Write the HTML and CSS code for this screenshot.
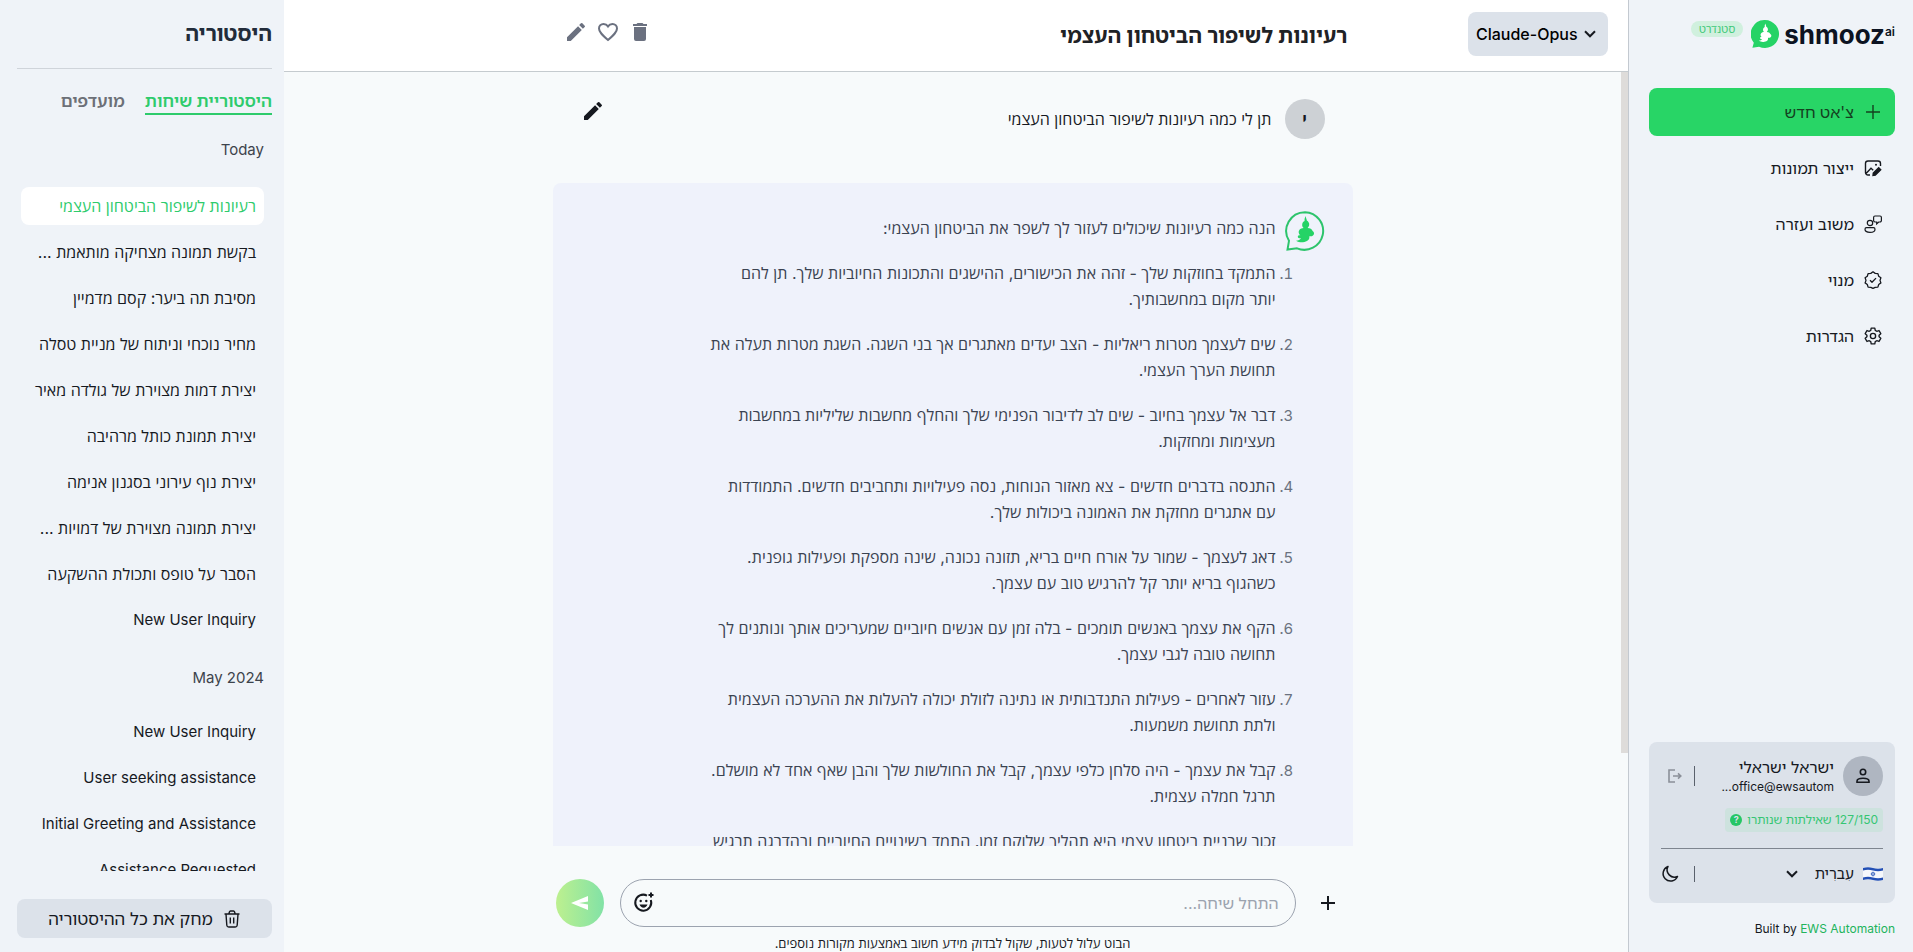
FILE: index.html
```html
<!DOCTYPE html>
<html lang="he" dir="rtl">
<head>
<meta charset="utf-8">
<title>shmooz ai</title>
<link rel="stylesheet" href="styles.css">
</head>
<body>
<svg width="0" height="0" class="sprite" aria-hidden="true">
  <symbol id="genie" viewBox="0 0 40 40">
    <path d="M20.600 5 C20.800 7 21.800 8 21.800 9.500 C23.400 10.500 24.500 12 24.200 14 C24 15.500 23 16.300 22.600 17 C25 17 27 18 27.600 20 C29.500 21 29.500 23.500 28 24.500 C26.500 25.800 24.800 25 24.200 25.600 C25.200 28.600 22 31 18 31.300 C15.500 31.500 13 31 11 29.800 C13.500 29.400 15 28.800 16 27.300 C14.300 27.500 12.500 26.800 12.800 25.400 C13.300 24.200 14.800 24.200 15.400 24.600 C13.600 23 13 20.500 14.500 18.800 C15.500 17.500 17 17.100 18.600 17 C17.600 16 17 15 17.200 13.500 C17.300 11.800 18.300 10.700 19.600 10 C19.300 8 20 6.500 20.600 5Z"/>
  </symbol>
  <symbol id="pencil" viewBox="0 0 24 24"><path d="M3 17.250V21h3.750L17.810 9.940l-3.750-3.750L3 17.250zM20.710 7.040a1 1 0 0 0 0-1.410l-2.340-2.340a1 1 0 0 0-1.410 0l-1.830 1.830 3.750 3.750 1.830-1.830z"/></symbol>
  <symbol id="chevron" viewBox="0 0 12 8"><path d="M1 1.300l5 5 5-5" fill="none" stroke="currentColor" stroke-width="2"/></symbol>
</svg>
<div class="app">
  <aside class="sidebar">
    <div class="brand">
      <a class="logo" href="#" dir="ltr">
        <svg class="logo-mark" viewBox="0 0 40 40" aria-hidden="true"><path d="M20 0a20 20 0 1 1-8.500 38.100L2 39.500l2-7A20 20 0 0 1 20 0z" fill="#25d366"/><use href="#genie" fill="#fff"/></svg>
        <span class="logo-word">shmooz</span><sup class="logo-sup">ai</sup>
      </a>
      <span class="plan">סטנדרט</span>
    </div>
    <nav class="nav">
      <button class="nav-item nav-new" type="button">
        <svg viewBox="0 0 18 18" fill="none" stroke="currentColor" stroke-width="1.400"><path d="M9 2v14M2 9h14"/></svg>צ'אט חדש</button>
      <a class="nav-item" href="#"><svg viewBox="0 0 18 18" fill="none" stroke="currentColor" stroke-width="1.400"><path d="M6 16H4a2.500 2.500 0 0 1-2.500-2.500v-9A2.500 2.500 0 0 1 4 2h10a2.500 2.500 0 0 1 2.500 2.500V7M2 14.500l5-5.300 2.200 2"/><circle cx="12" cy="5.800" r="1" fill="currentColor" stroke="none"/><path d="M9 16.500l.3-2.300 5.400-5.400 2 2-5.400 5.400z" fill="currentColor"/></svg>ייצור תמונות</a>
      <a class="nav-item" href="#"><svg viewBox="0 0 18 18" fill="none" stroke="currentColor" stroke-width="1.200"><circle cx="6" cy="8" r="2.700"/><path d="M2.500 12.700h7a1.500 1.500 0 0 1 1.500 1.500c0 2-2.300 3.200-5 3.200s-5-1.200-5-3.200a1.500 1.500 0 0 1 1.500-1.500zM11 1h5a1.400 1.400 0 0 1 1.400 1.400v3.200A1.400 1.400 0 0 1 16 7h-1.300l-2 1.800V7H11a1.400 1.400 0 0 1-1.400-1.400V2.400A1.400 1.400 0 0 1 11 1z"/></svg>משוב ועזרה</a>
      <a class="nav-item" href="#"><svg viewBox="0 0 18 18" fill="none" stroke="currentColor" stroke-width="1.300" stroke-linejoin="round"><path d="M9 .8l2.200 1.600 2.700.2.800 2.600 2.200 1.600-.9 2.600.9 2.500-2.200 1.600-.8 2.600-2.700.2L9 17.400l-2.200-1.100-2.700-.2-.8-2.600-2.200-1.600.9-2.500-.9-2.600 2.200-1.600.8-2.600 2.700-.2z"/><path d="M6 9.300l2 2 4-4.200"/></svg>מנוי</a>
      <a class="nav-item" href="#"><svg viewBox="0 0 24 24" fill="none" stroke="currentColor" stroke-width="1.800" stroke-linejoin="round"><circle cx="12" cy="12" r="3.500"/><path d="M9.600 1.500h4.800l.6 3 2 1.200 3-1 2.400 4.200-2.300 2v2.200l2.300 2-2.400 4.200-3-1-2 1.200-.6 3H9.600l-.6-3-2-1.200-3 1-2.400-4.200 2.300-2v-2.200l-2.300-2L4 4.700l3 1 2-1.200z"/></svg>הגדרות</a>
    </nav>
    <section class="account">
      <div class="profile">
        <span class="avatar avatar-user"><svg width="18" height="18" viewBox="0 0 18 18" fill="none" stroke="currentColor" stroke-width="1.600"><circle cx="9" cy="5" r="2.700"/><path d="M3 15.200v-1c0-1.800 3-2.900 6-2.900s6 1.100 6 2.900v1z"/></svg></span>
        <div class="who"><strong class="who-name">ישראל ישראלי</strong><span class="who-mail">office@ewsautom...</span></div>
        <span class="bar"></span>
        <button class="icon-btn logout" type="button" aria-label="יציאה"><svg width="14" height="14" viewBox="0 0 14 14" fill="none" stroke="currentColor" stroke-width="1.600"><path d="M7 1H1v12h6M5 7h7.500M10 4.300L12.800 7 10 9.700"/></svg></button>
      </div>
      <div class="quota">127/150 שאילתות שנותרו <span class="quota-help">?</span></div>
      <div class="locale">
        <svg class="flag" viewBox="0 0 20 14"><path d="M0 1q5-1.500 10 0t10 0v12q-5 1.500-10 0t-10 0z" fill="#f6f8fc"/><path d="M0 1q5-1.500 10 0t10 0v2.500q-5 1.500-10 0t-10 0zM0 10.500q5-1.500 10 0t10 0V13q-5 1.500-10 0t-10 0z" fill="#2450b5"/><path d="M10 4.800l2 3.200H8zM10 9.300L8 6h4z" fill="none" stroke="#2450b5" stroke-width=".6"/></svg>
        <label class="lang"><select class="lang-select" aria-label="שפה"><option>עִברִית</option></select><svg class="lang-arrow"><use href="#chevron"/></svg></label>
        <span class="bar bar-short"></span>
        <button class="icon-btn" type="button" aria-label="מצב כהה"><svg width="18" height="18" viewBox="0 0 18 18" fill="none" stroke="currentColor" stroke-width="1.500" stroke-linejoin="round"><path d="M7 1.500A7.500 7.500 0 1 0 16.500 11.500 7.300 7.300 0 0 1 7 1.500z"/></svg></button>
      </div>
    </section>
    <p class="credit" dir="ltr">Built by <a href="#">EWS Automation</a></p>
  </aside>

  <main class="main">
    <header class="topbar">
      <label class="model" dir="ltr"><select class="model-select" aria-label="מודל"><option>Claude-Opus</option></select><svg class="model-arrow"><use href="#chevron"/></svg></label>
      <div class="topbar-inner">
        <h1 class="topbar-title">רעיונות לשיפור הביטחון העצמי</h1>
        <div class="actions">
          <button class="icon-btn" type="button" aria-label="מחק"><svg width="24" height="24" viewBox="0 0 24 24" fill="currentColor"><path d="M6 19a2 2 0 0 0 2 2h8a2 2 0 0 0 2-2V7H6zM19 4h-3.500l-1-1h-5l-1 1H5v2h14z"/></svg></button>
          <button class="icon-btn" type="button" aria-label="מועדפים"><svg width="24" height="24" viewBox="0 0 24 24" fill="none" stroke="currentColor" stroke-width="2"><path d="M12 20C6 14.800 3 12 3 8.500A4.500 4.500 0 0 1 7.500 4C9.300 4 11 4.900 12 6.400 13 4.900 14.700 4 16.500 4A4.500 4.500 0 0 1 21 8.500c0 3.500-3 6.300-9 11.500z"/></svg></button>
          <button class="icon-btn" type="button" aria-label="שנה שם"><svg width="24" height="24" fill="currentColor"><use href="#pencil"/></svg></button>
        </div>
      </div>
    </header>
    <div class="body">
      <div class="scrollbar"><div class="thumb"></div></div>
      <div class="content">
        <div class="thread">
          <article class="ask">
            <span class="avatar avatar-letter">י</span>
            <p class="ask-text">תן לי כמה רעיונות לשיפור הביטחון העצמי</p>
            <button class="icon-btn ask-edit" type="button" aria-label="עריכה"><svg width="24" height="24" fill="currentColor"><use href="#pencil"/></svg></button>
          </article>
          <article class="reply">
            <svg class="reply-mark" viewBox="0 0 40 40"><path d="M20 1.200A18.800 18.800 0 1 1 12 37.300L2.500 38.600 4 29.800A18.800 18.800 0 0 1 20 1.200z" fill="none" stroke="#2dc46c" stroke-width="2"/><use href="#genie" fill="#25d366"/></svg>
            <div class="prose">
              <p>הנה כמה רעיונות שיכולים לעזור לך לשפר את הביטחון העצמי:</p>
              <ol>
                <li>התמקד בחוזקות שלך - זהה את הכישורים, ההישגים והתכונות החיוביות שלך. תן להם יותר&nbsp;מקום במחשבותיך.</li>
                <li>שים לעצמך מטרות ריאליות - הצב יעדים מאתגרים אך בני השגה. השגת מטרות תעלה את תחושת הערך העצמי.</li>
                <li>דבר אל עצמך בחיוב - שים לב לדיבור הפנימי שלך והחלף מחשבות שליליות במחשבות מעצימות ומחזקות.</li>
                <li>התנסה בדברים חדשים - צא מאזור הנוחות, נסה פעילויות ותחביבים חדשים. התמודדות עם&nbsp;אתגרים מחזקת את האמונה ביכולות שלך.</li>
                <li>דאג לעצמך - שמור על אורח חיים בריא, תזונה נכונה, שינה מספקת ופעילות גופנית. כשהגוף&nbsp;בריא יותר קל להרגיש טוב עם עצמך.</li>
                <li>הקף את עצמך באנשים תומכים - בלה זמן עם אנשים חיוביים שמעריכים אותך ונותנים לך תחושה טובה לגבי עצמך.</li>
                <li>עזור לאחרים - פעילות התנדבותית או נתינה לזולת יכולה להעלות את ההערכה העצמית ולתת&nbsp;תחושת משמעות.</li>
                <li>קבל את עצמך - היה סלחן כלפי עצמך, קבל את החולשות שלך והבן שאף אחד לא מושלם. תרגל&nbsp;חמלה עצמית.</li>
              </ol>
              <p>זכור שבניית ביטחון עצמי היא תהליך שלוקח זמן. התמד בשינויים החיוביים ובהדרגה תרגיש</p>
            </div>
          </article>
        </div>
        <form class="composer">
          <button class="icon-btn attach" type="button" aria-label="צרף"><svg width="24" height="24" viewBox="0 0 24 24" stroke="currentColor" stroke-width="2"><path d="M12 5v14M5 12h14"/></svg></button>
          <div class="field">
            <input class="field-input" type="text" placeholder="התחל שיחה..." aria-label="התחל שיחה">
            <button class="icon-btn" type="button" aria-label="אימוג'י"><svg width="24" height="24" viewBox="0 0 24 24" fill="none" stroke="currentColor" stroke-width="2"><path d="M15 4.600A8 8 0 1 0 18.800 9"/><path d="M19 1.500v5M16.500 4h5"/><path d="M7.500 13.500h8c-.6 2-2.200 3.200-4 3.200s-3.400-1.200-4-3.200z" fill="currentColor" stroke="none"/><circle cx="8.700" cy="10" r="1.200" fill="currentColor" stroke="none"/><circle cx="14.300" cy="10" r="1.200" fill="currentColor" stroke="none"/></svg></button>
          </div>
          <button class="send" type="submit" aria-label="שלח"><svg width="20" height="20" viewBox="0 0 20 20" fill="#fff"><path d="M1 10L18 3v5.600L9 10l9 1.400V17z"/></svg></button>
        </form>
        <p class="notice">הבוט עלול לטעות, שקול לבדוק מידע חשוב באמצעות מקורות נוספים.</p>
      </div>
    </div>
  </main>

  <aside class="history">
    <h2 class="history-title">היסטוריה</h2>
    <div class="tabs">
      <button class="tab tab-on" type="button">היסטוריית שיחות</button>
      <button class="tab" type="button">מועדפים</button>
    </div>
    <div class="history-list">
      <h3 class="period">Today</h3>
      <ul class="chats">
        <li><a class="chat chat-on" href="#">רעיונות לשיפור הביטחון העצמי</a></li>
        <li><a class="chat" href="#">בקשת תמונה מצחיקה מותאמת ...</a></li>
        <li><a class="chat" href="#">מסיבת תה ביער: קסם מדמיין</a></li>
        <li><a class="chat" href="#">מחיר נוכחי וניתוח של מניית טסלה</a></li>
        <li><a class="chat" href="#">יצירת דמות מצוירת של גולדה מאיר</a></li>
        <li><a class="chat" href="#">יצירת תמונת כותל מרהיבה</a></li>
        <li><a class="chat" href="#">יצירת נוף עירוני בסגנון אנימה</a></li>
        <li><a class="chat" href="#">יצירת תמונה מצוירת של דמויות ...</a></li>
        <li><a class="chat" href="#">הסבר על טופס ותכולת ההשקעה</a></li>
        <li><a class="chat" href="#" lang="en">New User Inquiry</a></li>
      </ul>
      <h3 class="period">May 2024</h3>
      <ul class="chats">
        <li><a class="chat" href="#" lang="en">New User Inquiry</a></li>
        <li><a class="chat" href="#" lang="en">User seeking assistance</a></li>
        <li><a class="chat" href="#" lang="en">Initial Greeting and Assistance</a></li>
        <li><a class="chat" href="#" lang="en">Assistance Requested</a></li>
      </ul>
    </div>
    <button class="clear" type="button"><svg width="18" height="18" viewBox="0 0 18 18" fill="none" stroke="currentColor" stroke-width="1.400"><path d="M1.500 4h15M3 4l.8 11.200A2 2 0 0 0 5.800 17h6.400a2 2 0 0 0 2-1.800L15 4M5.800 4l.7-2.200a1.200 1.200 0 0 1 1-.8h3a1.200 1.200 0 0 1 1 .8l.7 2.200M7.300 7.500v6M10.700 7.500v6"/></svg>מחק את כל ההיסטוריה</button>
  </aside>
</div>
</body>
</html>
```
FILE: styles.css
```css
* { box-sizing: border-box; }
body { margin: 0; font-family: Inter, "Noto Sans", "Noto Sans Hebrew", sans-serif; font-size: 16px; line-height: 24px; color: #16191f; background: #f7fafb; }
h1, h2, h3, p, ul { margin: 0; padding: 0; }
ul { list-style: none; }
a { color: inherit; text-decoration: none; }
button, select, input { font: inherit; color: inherit; }
button { cursor: pointer; border: 0; background: none; padding: 0; }
.sprite { position: absolute; }
.icon-btn { display: flex; flex: none; }
.app { display: flex; height: 100vh; overflow: hidden; }

/* Navigation sidebar */
.sidebar { flex: none; width: 285px; display: flex; flex-direction: column; padding: 20px 18px 12px 20px; background: #eff3f8; border-left: 1px solid #c3c9d0; }
.brand { display: flex; align-items: flex-start; gap: 8px; height: 68px; }
.logo { display: flex; align-items: flex-start; color: #0c1322; }
.logo-mark { width: 28px; height: 28px; margin-right: 5px; }
.logo-word { font-size: 26px; font-weight: 700; line-height: 29px; }
.logo-sup { font-size: 12px; font-weight: 600; line-height: 24px; }
.plan { margin-top: 1px; padding: 0 8px; border-radius: 8px; background: #d0f0de; color: #3ec878; font-size: 11px; line-height: 16px; }
.nav { display: flex; flex-direction: column; gap: 8px; }
.nav-item { display: flex; align-items: center; gap: 10px; height: 48px; padding: 0 13px; border-radius: 8px; }
.nav-item svg { width: 18px; height: 18px; }
.nav-new { background: #28d566; color: #14401f; }
.account { margin-top: auto; padding: 14px 12px 20px; border-radius: 8px; background: #dce2ea; }
.profile { display: flex; align-items: center; }
.avatar { flex: none; display: flex; align-items: center; justify-content: center; width: 40px; height: 40px; border-radius: 50%; }
.avatar-user { background: #afb6c1; }
.who { flex: 1; display: flex; flex-direction: column; margin-right: 9px; }
.who-name { font-weight: 400; line-height: 22px; }
.who-mail { font-size: 12px; line-height: 18px; }
.bar { width: 1px; height: 20px; background: #5a616c; margin-left: 12px; }
.bar-short { height: 16px; margin-left: 15px; }
.logout { color: #8b9099; margin-left: 7px; }
.quota { display: flex; align-items: center; gap: 5px; width: max-content; margin-top: 12px; padding: 0 5px; border-radius: 4px; background: #cde2de; color: #35c673; font-size: 12px; line-height: 24px; }
.quota-help { width: 12px; height: 12px; border-radius: 50%; background: #25c765; color: #dce2ea; font-size: 9px; font-weight: 700; line-height: 12px; text-align: center; }
.locale { display: flex; align-items: center; margin-top: 16px; padding-top: 16px; border-top: 1px solid #7e858f; }
.flag { width: 20px; height: 14px; margin-left: 9px; }
.lang { position: relative; width: 68px; margin-left: auto; }
.lang-select { appearance: none; display: block; width: 100%; border: 0; padding: 0; background: none; font-size: 15px; line-height: 18px; }
.lang-arrow { position: absolute; left: 0; top: 5px; width: 12px; height: 8px; pointer-events: none; }
.credit { margin-top: 14px; font-size: 12px; line-height: 23px; text-align: right; }
.credit a { color: #22b45c; }

/* Conversation */
.main { flex: 1; min-width: 0; display: flex; flex-direction: column; }
.topbar { flex: none; display: grid; grid-template-columns: 1fr minmax(0, 800px) 1fr; align-items: center; height: 72px; padding-right: 7px; background: #fff; border-bottom: 1px solid #c5cbcf; }
.model { position: relative; justify-self: start; width: 140px; margin: 0 13px 4px 0; }
.model-select { appearance: none; display: block; width: 100%; height: 44px; padding: 0 8px; border: 0; border-radius: 8px; background: #dce2ea; color: #000; font-weight: 500; }
.model-arrow { position: absolute; right: 12px; top: 18px; width: 12px; height: 8px; pointer-events: none; }
.topbar-inner { display: flex; align-items: center; justify-content: space-between; padding: 0 5px 0 11px; }
.topbar-title { font-size: 21px; font-weight: 700; line-height: 30px; color: #1f2226; }
.actions { display: flex; gap: 8px; padding-bottom: 7px; color: #6b7180; }
.body { flex: 1; min-height: 0; display: flex; }
.scrollbar { flex: none; width: 7px; display: flex; flex-direction: column; }
.scrollbar::after { content: ""; flex: 7; }
.thumb { flex: 24; background: #dedcda; }
.content { flex: 1; min-width: 0; display: flex; flex-direction: column; align-items: center; }
.thread { flex: 1; min-height: 0; width: 100%; max-width: 800px; overflow: hidden; }
.thread, .chats, .notice { font-family: Inter, "Open Sans", sans-serif; }
.ask { display: flex; align-items: flex-start; height: 111px; padding: 27px 28px 0; }
.avatar-letter { background: #cdd1d5; font-weight: 700; }
.ask-text { flex: 1; margin-right: 13px; line-height: 40px; }
.reply { display: flex; align-items: flex-start; padding: 28px; border-radius: 8px; background: #eff2fb; }
.reply-mark { flex: none; width: 40px; height: 40px; margin-left: 9px; }
.prose { width: 584px; margin-top: 4px; color: #3b4351; line-height: 26px; }
.prose ol { margin: 19px 0; padding: 0; }
.prose li + li { margin-top: 19px; }
.prose li::marker { color: #6b7280; font-size: 15px; }
.composer { flex: none; display: flex; align-items: center; width: 100%; max-width: 800px; margin-top: 33px; padding: 0 13px 0 3px; }
.attach { margin-left: 20px; }
.field { flex: 1; display: flex; align-items: center; height: 48px; margin-left: 16px; padding: 0 16px 0 11px; border: 1px solid #9ca3af; border-radius: 24px; }
.field-input { flex: 1; min-width: 0; padding: 0; border: 0; outline: 0; background: none; }
.field-input::placeholder { color: #9ca3af; opacity: 1; }
.send { display: flex; align-items: center; justify-content: center; width: 48px; height: 48px; border-radius: 50%; background: linear-gradient(90deg, #bdf08f, #82e2a6); }
.notice { margin-top: 4px; height: 21px; font-size: 13px; line-height: 24px; }

/* History */
.history { flex: none; width: 284px; display: flex; flex-direction: column; padding: 0 12px 14px 17px; background: #eff3f8; }
.history-title { height: 69px; padding-top: 19px; border-bottom: 1px solid #cfd4da; font-size: 21px; font-weight: 700; line-height: 30px; color: #222c3a; }
.tabs { display: flex; align-items: flex-start; gap: 20px; margin-top: 20px; }
.tab { padding: 0; border-bottom: 2px solid transparent; color: #6c7077; font-size: 17px; font-weight: 600; line-height: 24px; }
.tab-on { color: #2ecb6c; border-color: #2ecb6c; }
.history-list { flex: 1; min-height: 0; overflow: hidden; padding: 13px 8px 0 4px; }
.period { height: 45px; padding-top: 10px; color: #3d434c; font-size: 15px; font-weight: 400; }
.chats { display: flex; flex-direction: column; gap: 8px; margin-top: 14px; }
.chats + .period { height: 43px; margin-top: 17px; }
.chat { display: block; padding: 8px; border-radius: 8px; line-height: 22px; white-space: nowrap; }
.chat:lang(en) { font-size: 15px; }
.chat-on { background: #fff; color: #2ecb6c; }
.clear { flex: none; display: flex; align-items: center; justify-content: center; gap: 10px; height: 39px; margin-top: 28px; border-radius: 8px; background: #dce2ea; font-size: 17px; }
```
